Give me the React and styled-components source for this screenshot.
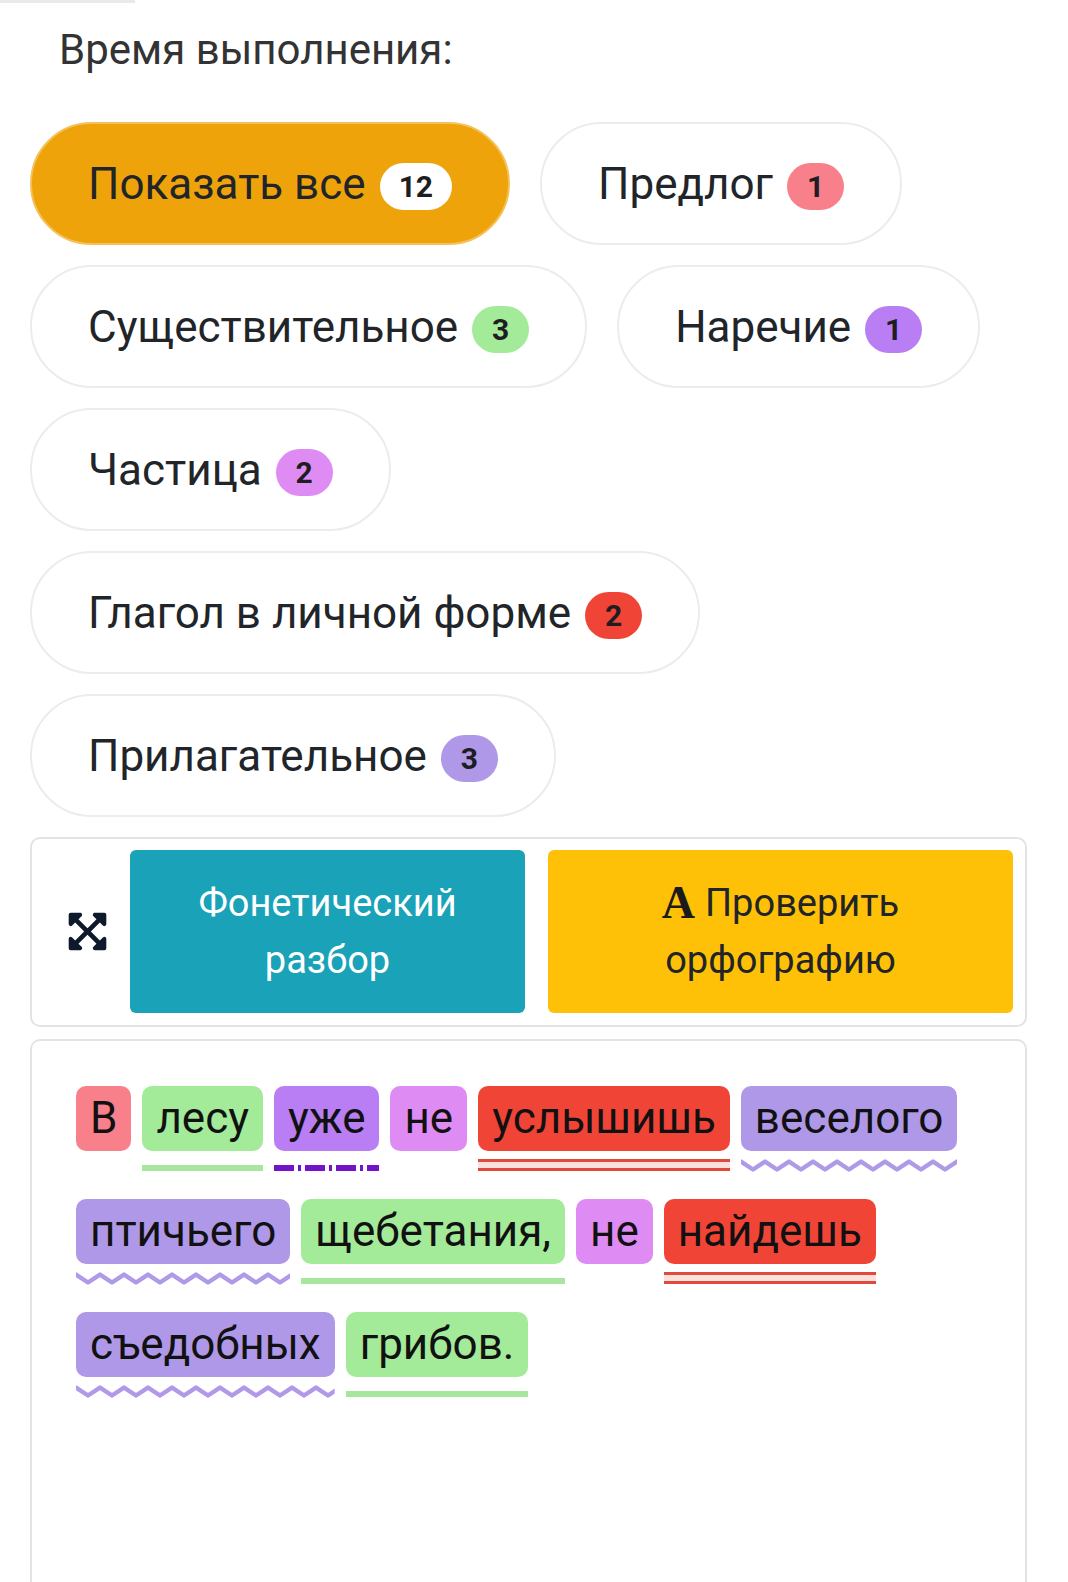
import React, { useId } from 'react';
import styled, { createGlobalStyle, css } from 'styled-components';
import { FaExpandArrowsAlt } from 'react-icons/fa';

const GlobalStyle = createGlobalStyle`
  html, body {
    margin: 0;
    padding: 0;
    background: #fff;
    overflow: hidden;
  }
  body {
    font-family: Roboto, "Noto Sans", Arial, sans-serif;
    color: #212529;
  }
  * { box-sizing: border-box; }
`;

const COLORS = {
  pink: '#F7808A',
  green: '#A3EA99',
  purple: '#B97EF3',
  violet: '#DF8BF4',
  red: '#F04437',
  lavender: '#AF98E8',
  white: '#ffffff',
};

const Page = styled.div`
  padding: 0 41px 0 30px;
`;

const TopLine = styled.div`
  width: 135px;
  height: 3px;
  margin-left: -30px;
  background: #e9e9e9;
`;

const Heading = styled.h2`
  margin: 23px 0 48px 29px;
  font-size: 42px;
  line-height: 48px;
  font-weight: 400;
  color: #333;
`;

const PillList = styled.div`
  display: flex;
  flex-wrap: wrap;
  gap: 20px 30px;
`;

const Pill = styled.button`
  display: inline-flex;
  align-items: center;
  height: 123px;
  padding: 0 56px;
  border-radius: 62px;
  border: 2px solid ${(p) => (p.$active ? '#f5c15a' : '#ececec')};
  background: ${(p) => (p.$active ? '#EFA30B' : '#fff')};
  font-family: inherit;
  font-size: 44px;
  color: #212529;
  cursor: pointer;
`;

const Badge = styled.span`
  display: inline-flex;
  align-items: center;
  justify-content: center;
  min-width: 57px;
  height: 47px;
  margin-left: 14px;
  margin-top: 6px;
  padding: 0 19px;
  border-radius: 24px;
  background: ${(p) => COLORS[p.$color]};
  font-size: 30px;
  font-weight: 700;
  color: #1d1d22;
`;

const Toolbar = styled.div`
  display: flex;
  height: 190px;
  margin-top: 20px;
  padding: 11px 12px 12px 0;
  border: 2px solid #e3e3e3;
  border-radius: 10px;
`;

const IconCell = styled.div`
  display: flex;
  align-items: center;
  justify-content: center;
  flex: none;
  width: 86px;
  margin-left: 12px;
  color: #0e1a2b;
`;

const ActionButton = styled.button`
  ${(p) =>
    p.$variant === 'info'
      ? css`
          width: 395px;
          flex: none;
          background: #1AA2B8;
          color: #fff;
        `
      : css`
          flex: 1;
          margin-left: 23px;
          background: #FFC107;
          color: #212529;
        `}
  border: none;
  border-radius: 6px;
  padding: 0 40px;
  font-family: inherit;
  font-size: 38px;
  line-height: 57px;
  text-align: center;
  cursor: pointer;
`;

const SerifMark = styled.span`
  display: inline-block;
  margin-right: 10px;
  font-family: "Liberation Serif", "DejaVu Serif", serif;
  font-weight: 700;
  font-size: 46px;
  line-height: 1;
  vertical-align: -2px;
  color: #1b1b1b;
`;

const TextBox = styled.div`
  min-height: 620px;
  margin-top: 12px;
  padding: 45px 40px 0 44px;
  border: 2px solid #e3e3e3;
  border-bottom: none;
  border-radius: 10px 10px 0 0;
`;

const Sentence = styled.div`
  display: flex;
  flex-wrap: wrap;
  gap: 28px 11px;
`;

const Word = styled.span`
  display: inline-flex;
  flex-direction: column;
`;

const Chip = styled.span`
  display: block;
  padding: 6px 14px;
  border-radius: 10px;
  background: ${(p) => COLORS[p.$color]};
  font-size: 44px;
  line-height: 53px;
  color: #111;
`;

const Underline = styled.span`
  display: block;
  height: 12px;
  margin-top: 8px;

  ${(p) =>
    p.$kind === 'solid' &&
    css`
      border-bottom: 6px solid #A6E79D;
    `}
  ${(p) =>
    p.$kind === 'dashdot' &&
    css`
      background: repeating-linear-gradient(
          90deg,
          #7414C9 0 20px,
          transparent 20px 24px,
          #7414C9 24px 27px,
          transparent 27px 31px
        )
        bottom / 100% 6px no-repeat;
    `}
  ${(p) =>
    p.$kind === 'double' &&
    css`
      border-top: 3px solid #DE4A3D;
      border-bottom: 3px solid #DE4A3D;
      background: #fbe0dc;
    `}
  svg {
    display: block;
    width: 0;
    min-width: 100%;
  }
`;

const Wavy = () => {
  const id = useId();
  return (
    <svg height="13">
      <defs>
        <pattern id={id} width="24" height="13" patternUnits="userSpaceOnUse">
          <path
            d="M-12 10.5 L0 2.5 L12 10.5 L24 2.5 L36 10.5"
            fill="none"
            stroke="#B09AE8"
            strokeWidth="4.5"
            strokeLinejoin="round"
          />
        </pattern>
      </defs>
      <rect width="100%" height="13" fill={`url(#${id})`} />
    </svg>
  );
};

const pills = [
  { label: 'Показать все', count: 12, color: 'white', active: true },
  { label: 'Предлог', count: 1, color: 'pink' },
  { label: 'Существительное', count: 3, color: 'green' },
  { label: 'Наречие', count: 1, color: 'purple' },
  { label: 'Частица', count: 2, color: 'violet' },
  { label: 'Глагол в личной форме', count: 2, color: 'red' },
  { label: 'Прилагательное', count: 3, color: 'lavender' },
];

const words = [
  { text: 'В', color: 'pink' },
  { text: 'лесу', color: 'green', line: 'solid' },
  { text: 'уже', color: 'purple', line: 'dashdot' },
  { text: 'не', color: 'violet' },
  { text: 'услышишь', color: 'red', line: 'double' },
  { text: 'веселого', color: 'lavender', line: 'wavy' },
  { text: 'птичьего', color: 'lavender', line: 'wavy' },
  { text: 'щебетания,', color: 'green', line: 'solid' },
  { text: 'не', color: 'violet' },
  { text: 'найдешь', color: 'red', line: 'double' },
  { text: 'съедобных', color: 'lavender', line: 'wavy' },
  { text: 'грибов.', color: 'green', line: 'solid' },
];

export default function App() {
  return (
    <>
      <GlobalStyle />
      <Page>
        <TopLine />
        <Heading>Время выполнения:</Heading>

        <PillList>
          {pills.map((p) => (
            <Pill key={p.label} $active={p.active}>
              {p.label}
              <Badge $color={p.color}>{p.count}</Badge>
            </Pill>
          ))}
        </PillList>

        <Toolbar>
          <IconCell>
            <FaExpandArrowsAlt size={43} />
          </IconCell>
          <ActionButton $variant="info">
            Фонетический
            <br />
            разбор
          </ActionButton>
          <ActionButton $variant="warning">
            <SerifMark>A</SerifMark>
            Проверить
            <br />
            орфографию
          </ActionButton>
        </Toolbar>

        <TextBox>
          <Sentence>
            {words.map((w, i) => (
              <Word key={i}>
                <Chip $color={w.color}>{w.text}</Chip>
                <Underline $kind={w.line}>{w.line === 'wavy' && <Wavy />}</Underline>
              </Word>
            ))}
          </Sentence>
        </TextBox>
      </Page>
    </>
  );
}
